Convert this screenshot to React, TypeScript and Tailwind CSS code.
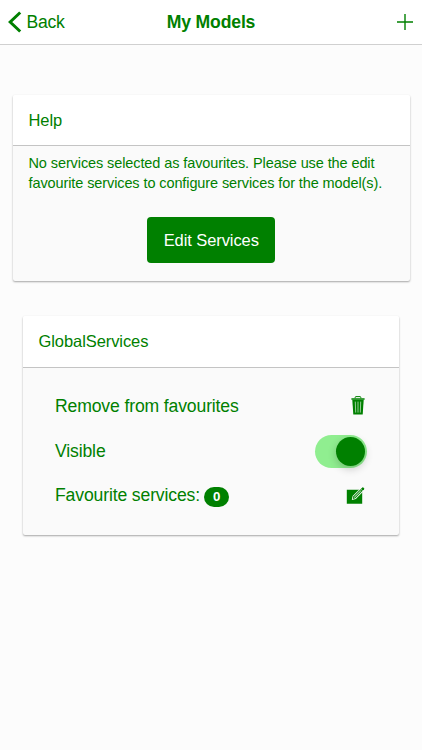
import React from "react";

function Card({ title, className, headerClass, children }: { title: string; className: string; headerClass: string; children: React.ReactNode }) {
  return (
    <section className={`overflow-hidden rounded-[2px] bg-[#fafafa] shadow-[0_1px_2px_rgba(0,0,0,0.35)] ${className}`}>
      <h2 className={`flex items-center border-b border-[#c4c4c4] bg-white pl-4 text-[16.5px] tracking-[-0.08px] font-normal ${headerClass}`}>
        {title}
      </h2>
      {children}
    </section>
  );
}

function TrashIcon() {
  return (
    <svg width="14" height="19" viewBox="0 0 14 19" fill="none" aria-hidden="true">
      <path d="M4.2 2.2V1.4Q4.2 .6 5 .6h4q.8 0 .8.8v.8" stroke="#008000" strokeWidth="1" />
      <path d="M.4 2.2h13.2v1.5H.4z" fill="#008000" />
      <path d="M1.3 3.7h11.4l-1 14.8H2.3z" fill="#008000" />
      <path d="M4.3 5.6l.4 11M7 5.6v11M9.7 5.6l-.4 11" stroke="#a5d5a5" strokeWidth=".9" />
    </svg>
  );
}

function EditIcon() {
  return (
    <svg width="19" height="18" viewBox="0 0 19 18" aria-hidden="true">
      <path d="M.8 2.8h15.4v14H.8z" fill="#008000" />
      <path d="M5.8 12.9l.8-4L15.2.6l3 2.8-8.4 8.6z" fill="#fafafa" />
      <path d="M6.8 12l.7-2.8L16.3.4q.5-.4 1 0l.8.8q.4.5 0 1L9.3 11.2z" fill="#008000" />
      <path d="M8.2 10.4l6.6-6.6" stroke="#fafafa" strokeWidth="1" />
      <path d="M14.6 1.8l2 2" stroke="#fafafa" strokeWidth=".6" />
    </svg>
  );
}

export default function App() {
  return (
    <div className="min-h-[750px] bg-[#fcfcfc] font-['Liberation_Sans',Arial,sans-serif] text-[#008000]">
      <header className="grid h-[45px] grid-cols-3 items-center border-b border-[#d0d0d0] bg-white">
        <button className="flex h-full items-center gap-[4.5px] pl-2 text-[17.6px] tracking-[-0.25px]">
          <svg width="14" height="22" viewBox="0 0 14 22" fill="none" aria-hidden="true">
            <path d="M12.2 1.5L2.2 11l10 9.5" stroke="#008000" strokeWidth="3" />
          </svg>
          <span className="pt-px">Back</span>
        </button>
        <h1 className="pt-px text-center text-[17.6px] tracking-[-0.16px] font-bold whitespace-nowrap">My Models</h1>
        <button className="flex h-full items-center justify-end pr-[9px]" aria-label="Add">
          <svg width="16" height="16" viewBox="0 0 16 16" aria-hidden="true">
            <path d="M8 0v16M0 8h16" stroke="#008000" strokeWidth="1.4" />
          </svg>
        </button>
      </header>
      <main className="pt-[50px]">
        <Card title="Help" className="mr-[12px] ml-[12.5px] h-[186px]" headerClass="h-[51px]">
          <p className="pt-[7px] pl-4 text-[14.5px] leading-[20px] tracking-[-0.1px] whitespace-nowrap">
            No services selected as favourites. Please use the edit
            <br />
            favourite services to configure services for the model(s).
          </p>
          <div className="flex justify-center pt-[24px]">
            <button className="h-[46px] w-[128px] rounded-[4px] bg-[#008000] text-[16.5px] tracking-[-0.08px] text-white">Edit Services</button>
          </div>
        </Card>
        <Card title="GlobalServices" className="mr-[23px] ml-[22.5px] mt-[35px] h-[219px]" headerClass="h-[52px] pb-px">
          <div className="grid grid-rows-3 pt-[15px] pr-[32px] pl-[32.5px] text-[17.6px] tracking-[-0.14px]">
            <div className="flex h-[45px] items-center justify-between">
              <span className="pt-[2px]">Remove from favourites</span>
              <span className="pr-[2px]"><TrashIcon /></span>
            </div>
            <div className="flex h-[45px] items-center justify-between">
              <span className="pt-px">Visible</span>
              <span className="mt-px flex h-[33px] w-[52px] items-center justify-end rounded-full bg-[#90ee90] pr-[2px]">
                <span className="size-[29px] rounded-full bg-[#008000] shadow-[0_3px_8px_rgba(0,0,0,0.2)]" />
              </span>
            </div>
            <div className="flex h-[45px] items-center justify-between">
              <span className="flex items-center gap-[4.5px]">
                Favourite services:
                <span className="mt-[3px] flex h-[19.5px] w-[24.5px] items-center justify-center rounded-[10px] bg-[#008000] text-[13.3px] font-bold text-white">0</span>
              </span>
              <span className="pr-[2px]"><EditIcon /></span>
            </div>
          </div>
        </Card>
      </main>
    </div>
  );
}
